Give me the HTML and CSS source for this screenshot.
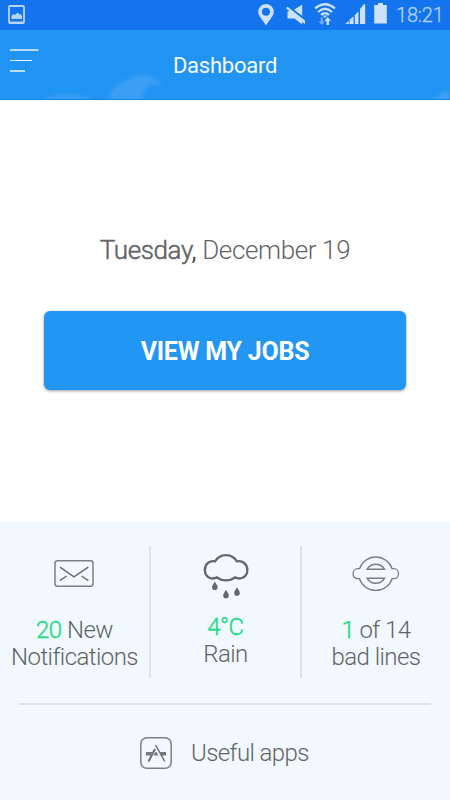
FILE: index.html
```html
<!DOCTYPE html>
<html lang="en">
<head>
<meta charset="utf-8">
<title>Dashboard</title>
<link rel="stylesheet" href="styles.css">
</head>
<body>
<div class="status">
  <svg class="shot" width="17" height="19" viewBox="0 0 17 19"><rect x="1" y="1" width="15" height="17" rx="1" fill="none" stroke="#b5d3fb" stroke-width="1.8"/><path d="M3.5 14V11l2-2 1.5 1 2.500-2.500 2 2 1-.5 1.500 2V14z" fill="#b5d3fb"/><path d="M1 17.500h15" stroke="#b5d3fb" stroke-width="2"/></svg>
  <svg class="pin" width="16" height="22" viewBox="0 0 16 22"><path fill="#cde1fd" fill-rule="evenodd" d="M8 0a7.800 7.800 0 0 0-7.800 7.800C.2 12.500 5 16 8 21.500 11 16 15.800 12.500 15.800 7.800A7.800 7.800 0 0 0 8 0zm0 3.800a4 4 0 1 1 0 8 4 4 0 0 1 0-8z"/></svg>
  <svg class="mute" width="20" height="21" viewBox="0 0 20 21"><path fill="#cde1fd" d="M1.500 2.800L19 16.500v3.500L16.200 18v2.500L8.500 14.500H1.500V7.500L3.500 7 0 4.200zM8 5.800L16.200.5v11.300z"/></svg>
  <svg class="wifi" width="22" height="23" viewBox="0 0 22 23"><g fill="none" stroke="#cde1fd" stroke-width="2.200"><path d="M1 5.500Q11-3 21 5.500"/><path d="M4 9Q11 2.500 18 9"/><path d="M7 12Q11 8 15 12"/></g><path d="M8.500 12.500h5L11 15z" fill="#cde1fd"/><path d="M6.500 14.500h2.500v4h2l-3.200 3.500L4.500 18.500h2z" fill="#6ba7f7"/><path d="M12.500 22v-4h-2l3.200-4 3.200 4h-2v4z" fill="#cde1fd"/></svg>
  <svg class="signal" width="21" height="21" viewBox="0 0 21 21"><path fill="#cde1fd" d="M0 20L3.800 17v3zM4.600 15.500l3.900-3V20H4.600zM9.800 11l3.700-3.500V20H9.800zM15 5l4-5h1.200v20H15z"/></svg>
  <svg class="battery" width="13" height="21" viewBox="0 0 13 21"><path fill="#cde1fd" d="M4 0h5v2h3.800v18.500H.2V2H4z"/></svg>
  <span class="clock">18:21</span>
</div>
<header class="header">
  <svg class="sky" width="450" height="70" viewBox="0 0 450 70"><defs><filter id="soft" x="-20%" y="-20%" width="140%" height="140%"><feGaussianBlur stdDeviation="2.200"/></filter></defs><g fill="#46a3f4" filter="url(#soft)"><path d="M108 74l2-14q6-2 10-8 6 1 10-4 8-4 13-1 6-3 9 2l9 4q-6 4-14 2-2 7-6 10l-2 9z" opacity=".8"/><path d="M40 73q3-6 11-5 4-6 12-1 5-5 9 0 8-3 9 1 8-1 10 5z" opacity=".65"/><path d="M432 72q10-3 12-7l8-3v10z"/></g></svg>
  <svg class="menu" width="29" height="26" viewBox="0 0 29 26"><path d="M0 2.200h28.500v1.500H0zM0 13h22v1.100H0zM0 23.200h15v1.600H0z" fill="#eaf5fe"/></svg>
  <h1>Dashboard</h1>
</header>
<main>
  <p class="date"><b>Tuesday<span>,</span></b> December 19</p>
  <button class="jobs">VIEW MY JOBS</button>
</main>
<footer>
  <div class="tiles">
    <section class="tile mail">
      <svg width="48" height="54" viewBox="0 0 48 54" fill="none" stroke="#7c8082" stroke-width="1.500"><rect x="4" y="14.700" width="38" height="25.600" rx="2.500"/><path d="M9 21.200L23 30.800 37.300 21.200M9 34.600L15.500 30M37.300 34.600L30.500 30" stroke="#6a6e70"/></svg>
      <p><em>20</em> New<br>Notifications</p>
    </section>
    <section class="tile rain">
      <svg width="48" height="54" viewBox="1.500 0 48 54"><path d="M14.200 15.300C16.500 11.300 20.300 9.100 25 9.100S33.500 11.300 35.800 15.300C41.500 14.200 46.300 18 46.300 24 46.300 31.300 39.500 34.200 34 31.300 31.500 33.200 28.500 34.400 25 34.400S18.500 33.200 16 31.300C10.500 34.200 3.900 31.300 3.900 24 3.900 18 8.500 14.200 14.200 15.300z" transform="translate(.5 0)" fill="none" stroke="#646668" stroke-width="2.300"/><g fill="#646668"><path id="drop" d="M14.300 35.500c1 2.300 2.800 3.900 2.800 5.700a2.800 2.800 0 0 1-5.600 0c0-1.800 1.800-3.400 2.800-5.700z"/><use href="#drop" x="11.200" y="8.200"/><use href="#drop" x="22.200" y="5.700"/></g></svg>
      <p><em>4°C</em><br>Rain</p>
    </section>
    <section class="tile lines">
      <svg width="48" height="54" viewBox="0 0 48 54" fill="none" stroke="#7a7e80" stroke-width="1.300"><path d="M7.500 22.700A17.200 17.200 0 0 1 40.100 22.700H42A4.500 5 0 0 1 42 32.700H40.100A17.200 17.200 0 0 1 7.500 32.700H5.600A4.500 5 0 0 1 5.600 22.700z"/><path d="M15.200 23.200A10 10 0 0 1 32.400 23.200zM15.200 32.300A10 10 0 0 0 32.400 32.300z" stroke-width="1.500"/></svg>
      <p><em>1</em> of 14<br>bad lines</p>
    </section>
  </div>
  <div class="apps">
    <svg width="32" height="32" viewBox="0 0 32 32"><rect x=".8" y=".8" width="30.400" height="30.400" rx="6" fill="none" stroke="#7c8082" stroke-width="1.500"/><path d="M6 15h6.500l-2 3.500H6zM19.500 15H26v3.500h-4.500zM13.500 18.500l2-3.500h1l2 3.500z" fill="#75787a"/><path d="M15 12L8.500 24.500" stroke="#6c7072" stroke-width="2"/><path d="M15.500 8L24.800 24.500" stroke="#6c7072" stroke-width="1.500"/></svg>
    <span>Useful apps</span>
  </div>
</footer>
</body>
</html>
```

FILE: styles.css
```css
* { box-sizing: border-box; }
body { margin: 0; width: 450px; height: 800px; overflow: hidden; display: flex; flex-direction: column; font-family: Roboto, sans-serif; background: #fff; color: #626466; }
p, h1 { margin: 0; }
svg { display: block; flex: none; }
.status { height: 30px; background: #1474ed; display: flex; align-items: flex-start; padding: 4px 0 0 8px; }
.shot { margin-top: 1px; margin-right: 233px; }
.mute { margin-left: 12px; }
.wifi { margin-left: 8px; margin-top: -1px; }
.signal { margin-left: 9px; }
.battery { margin-left: 8px; margin-top: -1px; }
.clock { margin-left: 9px; font-size: 20px; line-height: 22px; color: #b3d2fb; font-weight: 300; letter-spacing: -.2px; -webkit-text-stroke: .3px #b3d2fb; }
.header { position: relative; height: 70px; background: #2194f3; border-bottom: 1px solid #1684e2; display: flex; justify-content: center; }
.sky { position: absolute; left: 0; top: 0; height: 69px; }
.menu { position: absolute; left: 10px; top: 17px; }
.header h1 { position: relative; font-size: 22px; line-height: 26px; margin-top: 23px; font-weight: 400; letter-spacing: -.25px; color: #f4f9ff; }
main { height: 422px; display: flex; flex-direction: column; align-items: center; }
.date { margin-top: 134px; font-size: 26px; line-height: 32px; font-weight: 300; letter-spacing: -.38px; white-space: nowrap; }
.date b { font-weight: 300; -webkit-text-stroke: .5px #626466; }
.date b span { color: #222; }
.jobs { margin-top: 45px; width: 362px; height: 79px; border: 0; border-radius: 6px; background: #2196f3; color: #fff; font: 700 25px/30px Roboto, sans-serif; letter-spacing: -.25px; padding: 3px 0 0; box-shadow: 0 1px 3px rgba(0,0,0,.4); }
footer { height: 278px; background: #f1f8fe; }
.tiles { display: grid; grid-template-columns: 149px 151px 150px; padding-top: 24px; height: 156px; }
.tile { display: flex; flex-direction: column; align-items: center; font-size: 24px; line-height: 27px; font-weight: 300; letter-spacing: -.55px; text-align: center; white-space: nowrap; }
.rain { border-left: 2px solid #e1e4e8; }
.lines { border-left: 2px solid #e2dfe1; }
.tile p { margin-top: 17px; }
.rain p { margin-top: 14px; }
.tile em { font-style: normal; color: #1ddb85; -webkit-text-stroke: .4px #1ddb85; }
.apps { margin: 25px 19px 0; border-top: 2px solid #dfe1e4; padding-top: 32px; display: flex; align-items: center; padding-left: 121px; gap: 19px; font-size: 24px; line-height: 32px; font-weight: 300; letter-spacing: -.6px; }
```
